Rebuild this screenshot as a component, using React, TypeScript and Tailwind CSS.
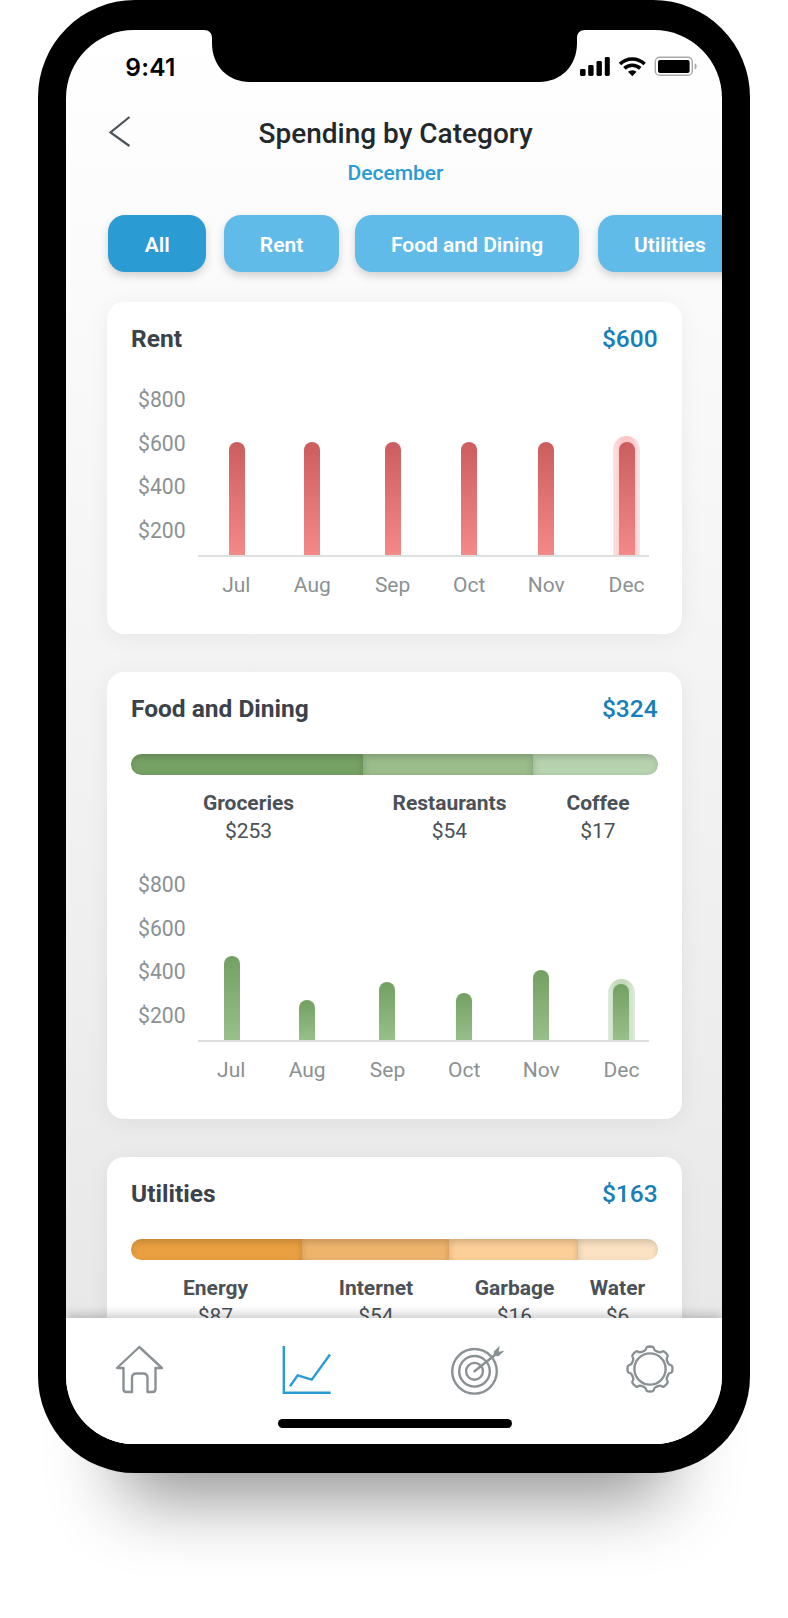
import React from "react";

type Segment = { name: string; value: string; bar: string; label: string };
type Column = { month: string; height: number };
type Tone = { bar: string; halo: string };

const RED: Tone = {
  bar: "bg-linear-to-b from-[#cc5d5f] to-[#f48989]",
  halo: "bg-[linear-gradient(90deg,#fde2e2,#fcc6c6_35%,#fcc6c6_65%,#fde2e2)]",
};
const GREEN: Tone = {
  bar: "bg-linear-to-b from-[#73a062] to-[#98bf8a]",
  halo: "bg-[linear-gradient(90deg,#dfebdb,#c2d9bb_35%,#c2d9bb_65%,#dfebdb)]",
};

const rent: Column[] = ["Jul", "Aug", "Sep", "Oct", "Nov", "Dec"].map((month) => ({ month, height: 113.5 }));
const food: Column[] = [
  { month: "Jul", height: 84 },
  { month: "Aug", height: 40 },
  { month: "Sep", height: 57.5 },
  { month: "Oct", height: 47 },
  { month: "Nov", height: 70 },
  { month: "Dec", height: 56 },
];

const foodSegments: Segment[] = [
  { name: "Groceries", value: "$253", bar: "w-[232.5px] bg-[#76a164]", label: "w-[234px]" },
  { name: "Restaurants", value: "$54", bar: "w-[169.7px] bg-[#9abd8b]", label: "w-[168px]" },
  { name: "Coffee", value: "$17", bar: "grow bg-[#b7d2ae]", label: "w-[129px]" },
];
const utilitySegments: Segment[] = [
  { name: "Energy", value: "$87", bar: "w-[171px] bg-[#eaa040]", label: "w-[168px]" },
  { name: "Internet", value: "$54", bar: "w-[147px] bg-[#efb46c]", label: "w-[153px]" },
  { name: "Garbage", value: "$16", bar: "w-[129px] bg-[#fdcf98]", label: "w-[124px]" },
  { name: "Water", value: "$6", bar: "grow bg-[#fbe2c3]", label: "w-[82px]" },
];

function Notch() {
  return (
    <svg className="absolute left-[137.5px] top-[-1px]" width="382" height="54" viewBox="0 0 382 54">
      <path d="M0 0V1C5 1 8 4 8 9V14C8 37 24 53 46 53H335C357 53 373 37 373 14V9C373 4 376 1 381 1V0Z" />
    </svg>
  );
}

function StatusIcons() {
  return (
    <svg width="118" height="22" viewBox="0 0 118 22">
      <rect x="0" y="13" width="5.6" height="7" rx="1.4" />
      <rect x="8.2" y="9" width="5.4" height="11" rx="1.4" />
      <rect x="16.5" y="5" width="5.4" height="15" rx="1.4" />
      <rect x="24.8" y="1" width="5" height="19" rx="1.4" />
      <g fill="none" stroke="#000" strokeWidth="3.6">
        <path d="M40 8A17.5 17.5 0 0 1 64.6 8" />
        <path d="M44.4 12.4A11.3 11.3 0 0 1 60.2 12.4" />
      </g>
      <path d="M48 15.8A6.5 6.5 0 0 1 56.6 15.8L52.3 20.3Z" />
      <rect x="75.3" y="1.3" width="37" height="18" rx="4.4" fill="none" stroke="#a9a9a9" strokeWidth="1.4" />
      <rect x="78" y="4" width="31.6" height="13" rx="2" />
      <path d="M114.6 7.3C117.4 8.4 117.4 12.4 114.6 13.5Z" fill="#a9a9a9" />
    </svg>
  );
}

function Chip({ label, active = false, className }: { label: string; active?: boolean; className: string }) {
  return (
    <button
      className={`h-[57px] shrink-0 rounded-[17px] pt-[3px] text-[21px] font-semibold leading-[28px] text-white shadow-[0_4px_8px_rgba(0,0,0,0.17)] ${
        active ? "bg-[#2b9bd4]" : "bg-[#61bbe9]"
      } ${className}`}
    >
      {label}
    </button>
  );
}

function Card({ title, amount, className, children }: { title: string; amount: string; className: string; children: React.ReactNode }) {
  return (
    <section className={`shrink-0 rounded-[17px] bg-white px-[24px] pt-[23px] shadow-[0_4px_22px_rgba(0,0,0,0.06)] ${className}`}>
      <div className="flex justify-between text-[24.5px] leading-[28px]">
        <h2 className="font-bold text-[#3b424a]">{title}</h2>
        <span className="font-medium text-[#147fba]">{amount}</span>
      </div>
      {children}
    </section>
  );
}

function Breakdown({ segments }: { segments: Segment[] }) {
  return (
    <div className="mt-[31px]">
      <div className="flex h-[21px] overflow-hidden rounded-full">
        {segments.map((s) => (
          <div key={s.name} className={`shadow-[inset_0_3px_7px_rgba(0,0,0,0.18)] ${s.bar}`} />
        ))}
      </div>
      <div className="mt-[13.7px] flex pl-[0.5px] text-center text-[21px] leading-[28px] text-[#4a5157]">
        {segments.map((s) => (
          <div key={s.name} className={`shrink-0 whitespace-nowrap ${s.label}`}>
            <div className="-mx-4 font-bold">{s.name}</div>
            <div>{s.value}</div>
          </div>
        ))}
      </div>
    </div>
  );
}

const COLUMNS = "grid grid-cols-[72px_78px_82.6px_70.8px_83.2px_77.4px] justify-items-center";

function Chart({ data, tone, inset, className }: { data: Column[]; tone: Tone; inset: string; className: string }) {
  return (
    <div className={`flex text-[21px] leading-[28px] text-[#8b9193] ${className}`}>
      <div className="flex w-[67px] shrink-0 flex-col gap-[15.67px] pl-[7px] pt-[0.5px] text-[21.2px]">
        {["$800", "$600", "$400", "$200"].map((t) => (
          <span key={t}>{t}</span>
        ))}
      </div>
      <div className="w-[451px] shrink-0">
        <div className={`h-[169.5px] items-end ${COLUMNS} ${inset}`}>
          {data.map((c, i) =>
            i === data.length - 1 ? (
              <div key={c.month} className={`rounded-t-full px-[5.3px] pt-[5.3px] ${tone.halo}`}>
                <div className={`w-[16px] rounded-t-full ${tone.bar}`} style={{ height: c.height }} />
              </div>
            ) : (
              <div key={c.month} className={`w-[16px] rounded-t-full ${tone.bar}`} style={{ height: c.height }} />
            )
          )}
        </div>
        <div className="h-[2px] bg-[#dedede]" />
        <div className={`mt-[14px] ${COLUMNS} ${inset}`}>
          {data.map((c) => (
            <span key={c.month} className="first:pr-[2px]">
              {c.month}
            </span>
          ))}
        </div>
      </div>
    </div>
  );
}

function gearPath() {
  const p = (r: number, deg: number) => {
    const a = (deg * Math.PI) / 180;
    return `${(24 + r * Math.cos(a)).toFixed(2)} ${(24 + r * Math.sin(a)).toFixed(2)}`;
  };
  let d = "";
  for (let i = 0; i < 8; i++) {
    const a = i * 45;
    d += `${i ? "L" : "M"}${p(19, a - 17.5)}Q${p(19.9, a - 11)} ${p(21, a - 10.5)}Q${p(22.3, a - 9.5)} ${p(22.4, a - 6)}L${p(22.5, a)}L${p(22.4, a + 6)}Q${p(22.3, a + 9.5)} ${p(21, a + 10.5)}Q${p(19.9, a + 11)} ${p(19, a + 17.5)}`;
  }
  return d + "Z";
}

function NavBar() {
  return (
    <nav className="relative z-10 flex h-[126px] shrink-0 flex-col bg-white shadow-[0_-3px_10px_rgba(0,0,0,0.22)]">
      <div className="flex w-full items-start pl-[47.500px] pt-[26px]">
        <svg width="50" height="52" viewBox="0 0 50 52" fill="none" stroke="#8a9194" strokeWidth="2.4" strokeLinejoin="round">
          <path d="M25.3 3L3 24H9.5V45Q9.5 48 12.5 48H18V34Q18 29.500 22.500 29.500H29Q33.500 29.500 33.500 34V48H38.500Q41.500 48 41.500 45V24H48Z" />
        </svg>
        <svg width="50" height="52" viewBox="0 0 50 52" fill="none" stroke="#2b9bd4" strokeWidth="2.400" className="ml-[118.400px]">
          <path d="M1.800 2V48.800H48.700" />
          <path d="M8 42.300L15.700 31.300L29.800 35.700L48 10.500" />
        </svg>
        <svg width="56" height="52" viewBox="0 0 56 52" fill="none" stroke="#8a9194" strokeWidth="2.400" className="ml-[118px]">
          <circle cx="24.500" cy="27.300" r="22.300" />
          <circle cx="24.500" cy="27.300" r="15.300" />
          <circle cx="24.500" cy="27.300" r="8.400" />
          <path d="M24.500 27.300L48 8.500" strokeLinecap="round" />
          <path d="M43.800 12V7.500L49.800 1.800L48.700 7.800L54.500 6.800L48.500 12.300Z" fill="#8a9194" stroke="none" />
        </svg>
        <svg width="48" height="48" viewBox="0 0 48 48" fill="none" stroke="#8a9194" strokeWidth="2.400" strokeLinejoin="round" className="ml-[119.500px] mt-[1px]">
          <path d={gearPath()} />
          <circle cx="24" cy="24" r="15.600" />
        </svg>
      </div>
      <div className="ml-[212px] mt-[23px] h-[9px] w-[234px] rounded-full bg-black" />
    </nav>
  );
}

export default function App() {
  return (
    <main className="h-[1618px] w-[788px] overflow-hidden bg-white pl-[38.300px] font-['Roboto',sans-serif]">
      <div className="h-[1472.7px] w-[711.500px] rounded-[97px] bg-black px-[28px] pt-[30px] shadow-[0_108px_72px_-84px_rgba(0,0,0,0.44)]">
        <div className="relative flex h-[1413.500px] w-[655.500px] flex-col overflow-hidden rounded-[68px] bg-linear-to-b from-white to-[#e6e6e6]">
          <Notch />
          <div className="flex h-[70px] shrink-0 justify-between pl-[59px] pr-[24px] pt-[23px]">
            <span className="font-['Inter',sans-serif] text-[24.500px] font-semibold leading-[28px] tracking-[0.2px] text-black">9:41</span>
            <div className="pt-[3px]">
              <StatusIcons />
            </div>
          </div>
          <header className="grid shrink-0 grid-cols-[60px_1fr_60px] pl-[3px] pt-[16px] text-center">
            <svg width="24" height="34" viewBox="0 0 24 34" fill="none" stroke="#4b5258" strokeWidth="2.200" className="-mt-[0.700px] ml-[38.500px]">
              <path d="M21.500 2L2.500 17.500L21.500 31" />
            </svg>
            <div>
              <h1 className="mt-[1px] text-[28px] font-medium leading-[34px] text-[#22282b]">Spending by Category</h1>
              <p className="mt-[8px] text-[21px] font-medium leading-[28px] text-[#2b9bd4]">December</p>
            </div>
          </header>
          <div className="mt-[28px] flex shrink-0 pl-[42px]">
            <Chip label="All" active className="w-[98px]" />
            <Chip label="Rent" className="ml-[17.500px] w-[115.500px]" />
            <Chip label="Food and Dining" className="ml-[16px] w-[223.500px]" />
            <Chip label="Utilities" className="ml-[19px] w-[144px]" />
          </div>
          <div className="flex min-h-0 grow flex-col gap-[38.500px] pl-[40.700px] pr-[40.200px] pt-[30px]">
            <Card title="Rent" amount="$600" className="h-[331.500px]">
              <Chart data={rent} tone={RED} inset="pl-[3.300px]" className="mt-[32.500px]" />
            </Card>
            <Card title="Food and Dining" amount="$324" className="h-[446.700px]">
              <Breakdown segments={foodSegments} />
              <Chart data={food} tone={GREEN} inset="-ml-[1.800px]" className="mt-[25.800px]" />
            </Card>
            <Card title="Utilities" amount="$163" className="h-[446px]">
              <Breakdown segments={utilitySegments} />
            </Card>
          </div>
          <NavBar />
        </div>
      </div>
    </main>
  );
}
